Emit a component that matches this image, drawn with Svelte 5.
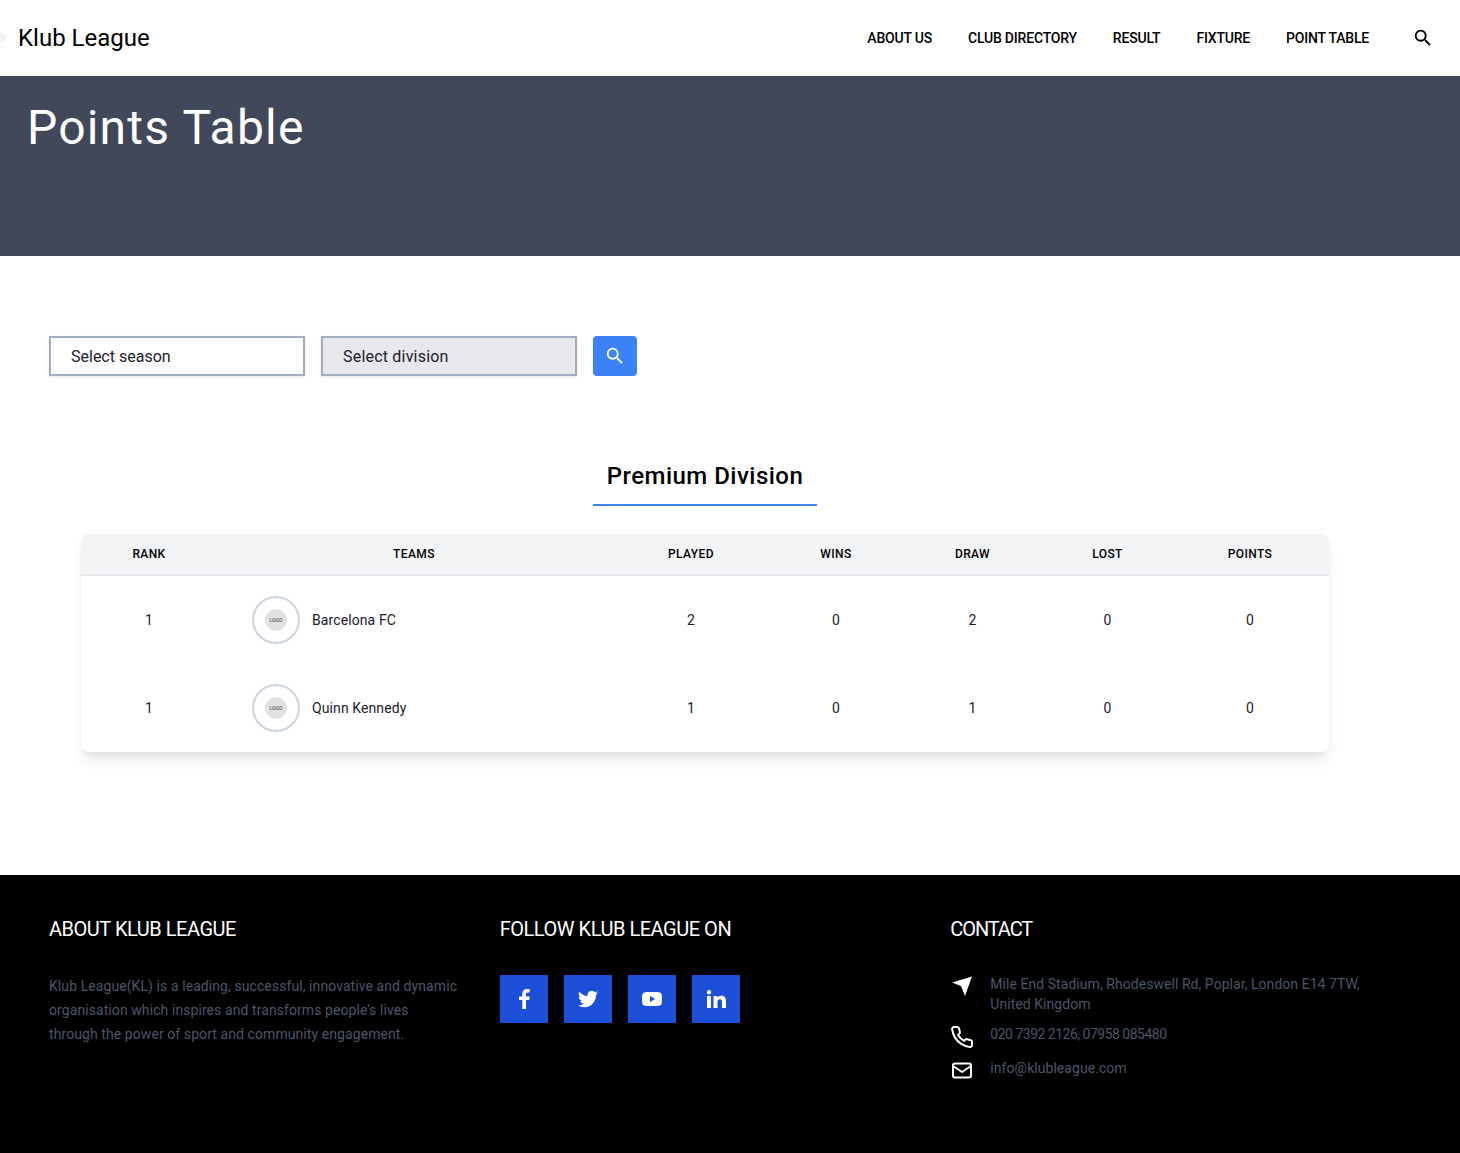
<script>
  const nav = ['ABOUT US', 'CLUB DIRECTORY', 'RESULT', 'FIXTURE', 'POINT TABLE'];
  const heads = ['Rank', 'Teams', 'Played', 'Wins', 'Draw', 'Lost', 'Points'];
  const rows = [
    { rank: 1, team: 'Barcelona FC', played: 2, wins: 0, draw: 2, lost: 0, points: 0 },
    { rank: 1, team: 'Quinn Kennedy', played: 1, wins: 0, draw: 1, lost: 0, points: 0 }
  ];
</script>

<header class="navbar">
  <a class="brand" href="#top"><span class="brand-mark"></span>Klub League</a>
  <nav>
    {#each nav as item}
      <a href="#top">{item}</a>
    {/each}
    <button class="nav-search" aria-label="Search">
      <svg width="22" height="22" viewBox="0 0 24 24" fill="currentColor">
        <path d="M15.5 14h-.79l-.28-.27A6.47 6.47 0 0 0 16 9.500 6.500 6.500 0 1 0 9.500 16c1.610 0 3.090-.59 4.230-1.570l.27.28v.79l5 4.990L20.490 19l-4.990-5zm-6 0C7.010 14 5 11.990 5 9.500S7.010 5 9.500 5 14 7.010 14 9.500 11.990 14 9.500 14z"/>
      </svg>
    </button>
  </nav>
</header>

<section class="banner">
  <h1>Points Table</h1>
</section>

<main>
  <div class="filters">
    <div class="select">Select season</div>
    <div class="select alt">Select division</div>
    <button class="search-btn" aria-label="Search">
      <svg width="22" height="22" viewBox="0 0 24 24" fill="currentColor">
        <path d="M15.5 14h-.79l-.28-.27A6.47 6.47 0 0 0 16 9.500 6.500 6.500 0 1 0 9.500 16c1.610 0 3.090-.59 4.230-1.570l.27.28v.79l5 4.990L20.490 19l-4.990-5zm-6 0C7.010 14 5 11.990 5 9.500S7.010 5 9.500 5 14 7.010 14 9.500 11.990 14 9.500 14z"/>
      </svg>
    </button>
  </div>

  <h2 class="division"><span>Premium Division</span></h2>

  <div class="table-card">
    <table>
      <colgroup>
        <col class="c-rank" />
        <col class="c-team" />
        <col class="c-played" />
        <col class="c-wins" />
        <col class="c-draw" />
        <col class="c-lost" />
        <col class="c-points" />
      </colgroup>
      <thead>
        <tr>
          {#each heads as h}
            <th>{h}</th>
          {/each}
        </tr>
      </thead>
      <tbody>
        {#each rows as r}
          <tr>
            <td>{r.rank}</td>
            <td class="team">
              <div class="team-cell">
                <div class="logo-ring"><div class="logo-dot">LOGO</div></div>
                <span>{r.team}</span>
              </div>
            </td>
            <td>{r.played}</td>
            <td>{r.wins}</td>
            <td>{r.draw}</td>
            <td>{r.lost}</td>
            <td>{r.points}</td>
          </tr>
        {/each}
      </tbody>
    </table>
  </div>
</main>

<footer>
  <div class="col">
    <h3>ABOUT KLUB LEAGUE</h3>
    <p class="about">Klub League(KL) is a leading, successful, innovative and dynamic organisation which inspires and transforms people’s lives through the power of sport and community engagement.</p>
  </div>
  <div class="col">
    <h3>FOLLOW KLUB LEAGUE ON</h3>
    <div class="socials">
      <a href="#top" aria-label="Facebook">
        <svg width="24" height="24" viewBox="0 0 24 24" fill="#fff"><path d="M14 22v-9h3.200l.5-3.600H14V7.200c0-1 .3-1.800 1.800-1.800h1.900V2.200C17.300 2.100 16.200 2 15 2c-2.800 0-4.700 1.700-4.700 4.800v2.600H7V13h3.300v9z"/></svg>
      </a>
      <a href="#top" aria-label="Twitter">
        <svg width="24" height="24" viewBox="0 0 24 24" fill="#fff"><path d="M22 5.900c-.7.300-1.500.5-2.400.6.900-.5 1.500-1.300 1.800-2.300-.8.500-1.700.8-2.600 1A4.100 4.100 0 0 0 11.800 9 11.700 11.700 0 0 1 3.400 4.700a4.100 4.100 0 0 0 1.300 5.500c-.7 0-1.300-.2-1.900-.5v.1c0 2 1.400 3.700 3.300 4-.6.200-1.200.2-1.900.1.500 1.600 2 2.800 3.800 2.800A8.300 8.300 0 0 1 2 18.400 11.700 11.700 0 0 0 8.300 20.200c7.600 0 11.700-6.300 11.700-11.700v-.5c.8-.6 1.500-1.300 2-2.100z"/></svg>
      </a>
      <a href="#top" aria-label="YouTube">
        <svg width="24" height="24" viewBox="0 0 24 24" fill="#fff"><path d="M21.600 7.300a2.500 2.500 0 0 0-1.800-1.800C18.200 5 12 5 12 5s-6.200 0-7.800.5a2.500 2.500 0 0 0-1.800 1.800C2 8.900 2 12 2 12s0 3.100.4 4.700a2.500 2.500 0 0 0 1.800 1.800C5.800 19 12 19 12 19s6.200 0 7.800-.5a2.500 2.500 0 0 0 1.800-1.800C22 15.100 22 12 22 12s0-3.100-.4-4.700zM10 15V9l5.200 3z"/></svg>
      </a>
      <a href="#top" aria-label="LinkedIn">
        <svg width="24" height="24" viewBox="0 0 24 24" fill="#fff"><path d="M3 9h4v12H3zM5 3a2.200 2.200 0 1 1 0 4.400A2.200 2.200 0 0 1 5 3zM9.500 9h3.800v1.700c.6-1 1.900-2 3.900-2 4 0 4.800 2.600 4.800 6V21h-4v-5.600c0-1.400 0-3.100-1.900-3.100s-2.600 1.400-2.600 3V21h-4z"/></svg>
      </a>
    </div>
  </div>
  <div class="col">
    <h3 class="tight">CONTACT</h3>
    <ul class="contact">
      <li>
        <svg width="24" height="24" viewBox="0 0 24 24" fill="#fff"><path d="M22 2.500 2 8.500l9 3.500 4 10z"/></svg>
        <span>Mile End Stadium, Rhodeswell Rd, Poplar, London E14 7TW, United Kingdom</span>
      </li>
      <li>
        <svg width="24" height="24" viewBox="0 0 24 24" fill="none" stroke="#fff" stroke-width="2" stroke-linejoin="round"><path transform="translate(0 1)" d="M22 16.920v3a2 2 0 0 1-2.180 2 19.790 19.790 0 0 1-8.630-3.070 19.500 19.500 0 0 1-6-6 19.790 19.790 0 0 1-3.070-8.670A2 2 0 0 1 4.110 2h3a2 2 0 0 1 2 1.720c.127.96.361 1.903.7 2.810a2 2 0 0 1-.45 2.110L8.090 9.910a16 16 0 0 0 6 6l1.270-1.270a2 2 0 0 1 2.110-.45c.907.339 1.850.573 2.810.7A2 2 0 0 1 22 16.920z"/></svg>
        <span class="phone">020 7392 2126, 07958 085480</span>
      </li>
      <li>
        <svg width="24" height="24" viewBox="0 0 24 24" fill="none" stroke="#fff" stroke-width="2" stroke-linejoin="round"><g transform="translate(0 1)"><rect x="3" y="4.500" width="18" height="14" rx="2"/><path d="m3 7 9 6 9-6"/></g></svg>
        <span>info@klubleague.com</span>
      </li>
    </ul>
  </div>
</footer>

<style>
  :global(body) {
    font-family: Roboto, "Open Sans", sans-serif;
    color: #000;
    background: #fff;
  }

  a {
    color: inherit;
    text-decoration: none;
  }

  button {
    border: 0;
    padding: 0;
    background: none;
    color: inherit;
    display: flex;
    align-items: center;
    justify-content: center;
  }

  .navbar {
    height: 76px;
    display: flex;
    align-items: center;
    justify-content: space-between;
    padding: 0 26px 0 18px;
  }

  .brand {
    position: relative;
    font-size: 24px;
    line-height: 1;
  }

  .brand-mark {
    position: absolute;
    left: -26px;
    top: 6px;
    width: 14px;
    height: 10px;
    background: #f4f4f4;
    border-radius: 50%;
  }

  nav {
    display: flex;
    align-items: center;
    gap: 36px;
    font-size: 14px;
    font-weight: 500;
    letter-spacing: -0.2px;
  }

  .nav-search {
    margin-left: 7px;
  }

  .banner {
    height: 180px;
    background: #414859;
    padding: 21px 27px;
    box-sizing: border-box;
  }

  h1 {
    margin: 0;
    color: #fff;
    font-size: 48px;
    line-height: 62px;
    font-weight: 400;
    letter-spacing: 1.2px;
  }

  main {
    height: 619px;
    box-sizing: border-box;
    padding: 80px 49px 0;
  }

  .filters {
    display: flex;
    gap: 16px;
  }

  .select {
    width: 256px;
    height: 40px;
    box-sizing: border-box;
    border: 2px solid #a0aec0;
    box-shadow: 0 1px 3px rgba(0, 0, 0, 0.1);
    padding: 0 20px;
    display: flex;
    align-items: center;
    font-size: 16px;
    color: #1a202c;
  }

  .select.alt {
    background: #e8e8ec;
    letter-spacing: 0.2px;
  }

  .search-btn {
    width: 44px;
    height: 40px;
    background: #3b82f6;
    color: #fff;
    border-radius: 4px;
  }

  .division {
    margin: 84px 0 28px;
    text-align: center;
    font-size: 24px;
    font-weight: 500;
    line-height: 32px;
    letter-spacing: 0.02em;
    width: 1312px;
  }

  .division span {
    display: inline-block;
    width: 224px;
    padding-bottom: 12px;
    border-bottom: 2px solid #3b82f6;
  }

  .table-card {
    width: 1248px;
    margin-left: 32px;
    border-radius: 8px;
    overflow: hidden;
    box-shadow: 0 10px 15px -3px rgba(0, 0, 0, 0.1), 0 4px 6px -2px rgba(0, 0, 0, 0.05);
  }

  table {
    width: 100%;
    table-layout: fixed;
    border-collapse: collapse;
  }

  .c-rank { width: 136px; }
  .c-team { width: 394px; }
  .c-played { width: 160px; }
  .c-wins { width: 130px; }
  .c-draw { width: 143px; }
  .c-lost { width: 127px; }
  .c-points { width: 158px; }

  th {
    height: 40px;
    padding: 0;
    background: #f3f4f6;
    border-bottom: 2px solid #e5e7eb;
    font-size: 12px;
    font-weight: 500;
    letter-spacing: 0.4px;
    text-transform: uppercase;
  }

  td {
    height: 88px;
    padding: 0;
    text-align: center;
    font-size: 14px;
    color: #1a202c;
  }

  .team-cell {
    display: flex;
    align-items: center;
    gap: 12px;
    padding-left: 35px;
    letter-spacing: 0.1px;
  }

  .logo-ring {
    width: 48px;
    height: 48px;
    box-sizing: border-box;
    border: 2px solid #cbd5e0;
    border-radius: 50%;
    display: flex;
    align-items: center;
    justify-content: center;
  }

  .logo-dot {
    width: 22px;
    height: 22px;
    border-radius: 50%;
    background: #e2e2e2;
    color: #666;
    font-size: 5px;
    font-weight: 600;
    display: flex;
    align-items: center;
    justify-content: center;
  }

  footer {
    height: 278px;
    box-sizing: border-box;
    background: #000;
    padding: 40px 59px 0 49px;
    display: grid;
    grid-template-columns: repeat(3, 1fr);
  }

  .col {
    min-width: 0;
  }

  h3 {
    margin: 0;
    color: #fff;
    font-size: 20px;
    line-height: 28px;
    font-weight: 400;
    letter-spacing: -0.47px;
  }

  h3.tight {
    letter-spacing: -1.1px;
  }

  .about {
    margin: 31px 0 0;
    max-width: 410px;
    font-size: 14px;
    line-height: 24px;
    letter-spacing: 0.08px;
    color: #4a5568;
  }

  .socials {
    display: flex;
    gap: 16px;
    margin-top: 32px;
  }

  .socials a {
    width: 48px;
    height: 48px;
    background: #1d4ed8;
    display: flex;
    align-items: center;
    justify-content: center;
  }

  .contact {
    list-style: none;
    margin: 31px 0 0;
    padding: 0;
    display: flex;
    flex-direction: column;
    gap: 10px;
  }

  .contact li {
    display: flex;
    gap: 16px;
    max-width: 416px;
    font-size: 14px;
    line-height: 20px;
    letter-spacing: 0.05px;
    color: #4a5568;
  }

  .contact .phone {
    letter-spacing: -0.5px;
  }

  .contact svg {
    flex: none;
  }
</style>
